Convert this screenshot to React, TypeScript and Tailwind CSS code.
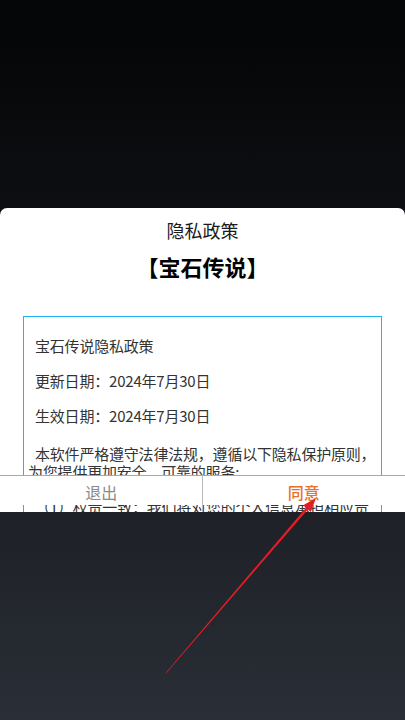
import React from 'react';

const paragraphs = [
  '宝石传说隐私政策',
  '更新日期：2024年7月30日',
  '生效日期：2024年7月30日',
  '本软件严格遵守法律法规，遵循以下隐私保护原则，为您提供更加安全、可靠的服务;',
  '（1）权责一致：我们将对您的个人信息承担相应责任。',
  '（2）目的明确：我们遵循正当、合法、必要的原则。',
];

export default function App() {
  return (
    <div className="relative min-h-[720px] w-full overflow-hidden bg-gradient-to-b from-[#040506] to-[#2a2e36] font-['Noto_Sans_CJK_SC','Noto_Sans',sans-serif]">
      <div className="pt-[208px]">
        <div className="relative h-[304px] overflow-hidden rounded-t-[7px] bg-white">
          <div className="flex h-[44px] items-center justify-center text-[18px] text-[#1a1a1a]">隐私政策</div>
          <div className="flex h-[28px] items-center justify-center text-[22px] font-bold text-black">【宝石传说】</div>

          <div className="mx-[23px] mt-[36px] border border-[#1cb6f0] pl-[4px] pr-0 pt-[20px]">
            {paragraphs.map((p, i) => (
              <p
                key={i}
                className={`mb-[17px] indent-[7px] text-[15px] leading-[18px] tracking-[-0.2px] text-[#333] ${i === 3 ? 'pt-[3px]' : ''}`}
              >
                {p}
              </p>
            ))}
          </div>

          {/* bottom action bar, sits over the scrolling text */}
          <div className="absolute left-0 right-0 top-[267px] flex h-[30px] border-t border-[#a8a8a8] bg-white text-[16px]">
            <button className="flex flex-1 items-center justify-center pt-[2px] text-[#8a8a8a]">退出</button>
            <button className="flex flex-1 items-center justify-center pt-[2px] font-medium text-[#e8702a]">同意</button>
          </div>
          <div className="absolute left-[202px] top-[267px] h-[40px] w-px bg-[#b8b8b8]" />
        </div>
      </div>

      <svg className="pointer-events-none absolute left-0 top-0" width="405" height="720" viewBox="0 0 405 720">
        <polygon
          points="165.8,672.8 305.9,507.8 303.1,505.3 316,498 310.7,511.9 307.9,509.4 166.2,673.2"
          fill="#e41d25"
        />
      </svg>
    </div>
  );
}
